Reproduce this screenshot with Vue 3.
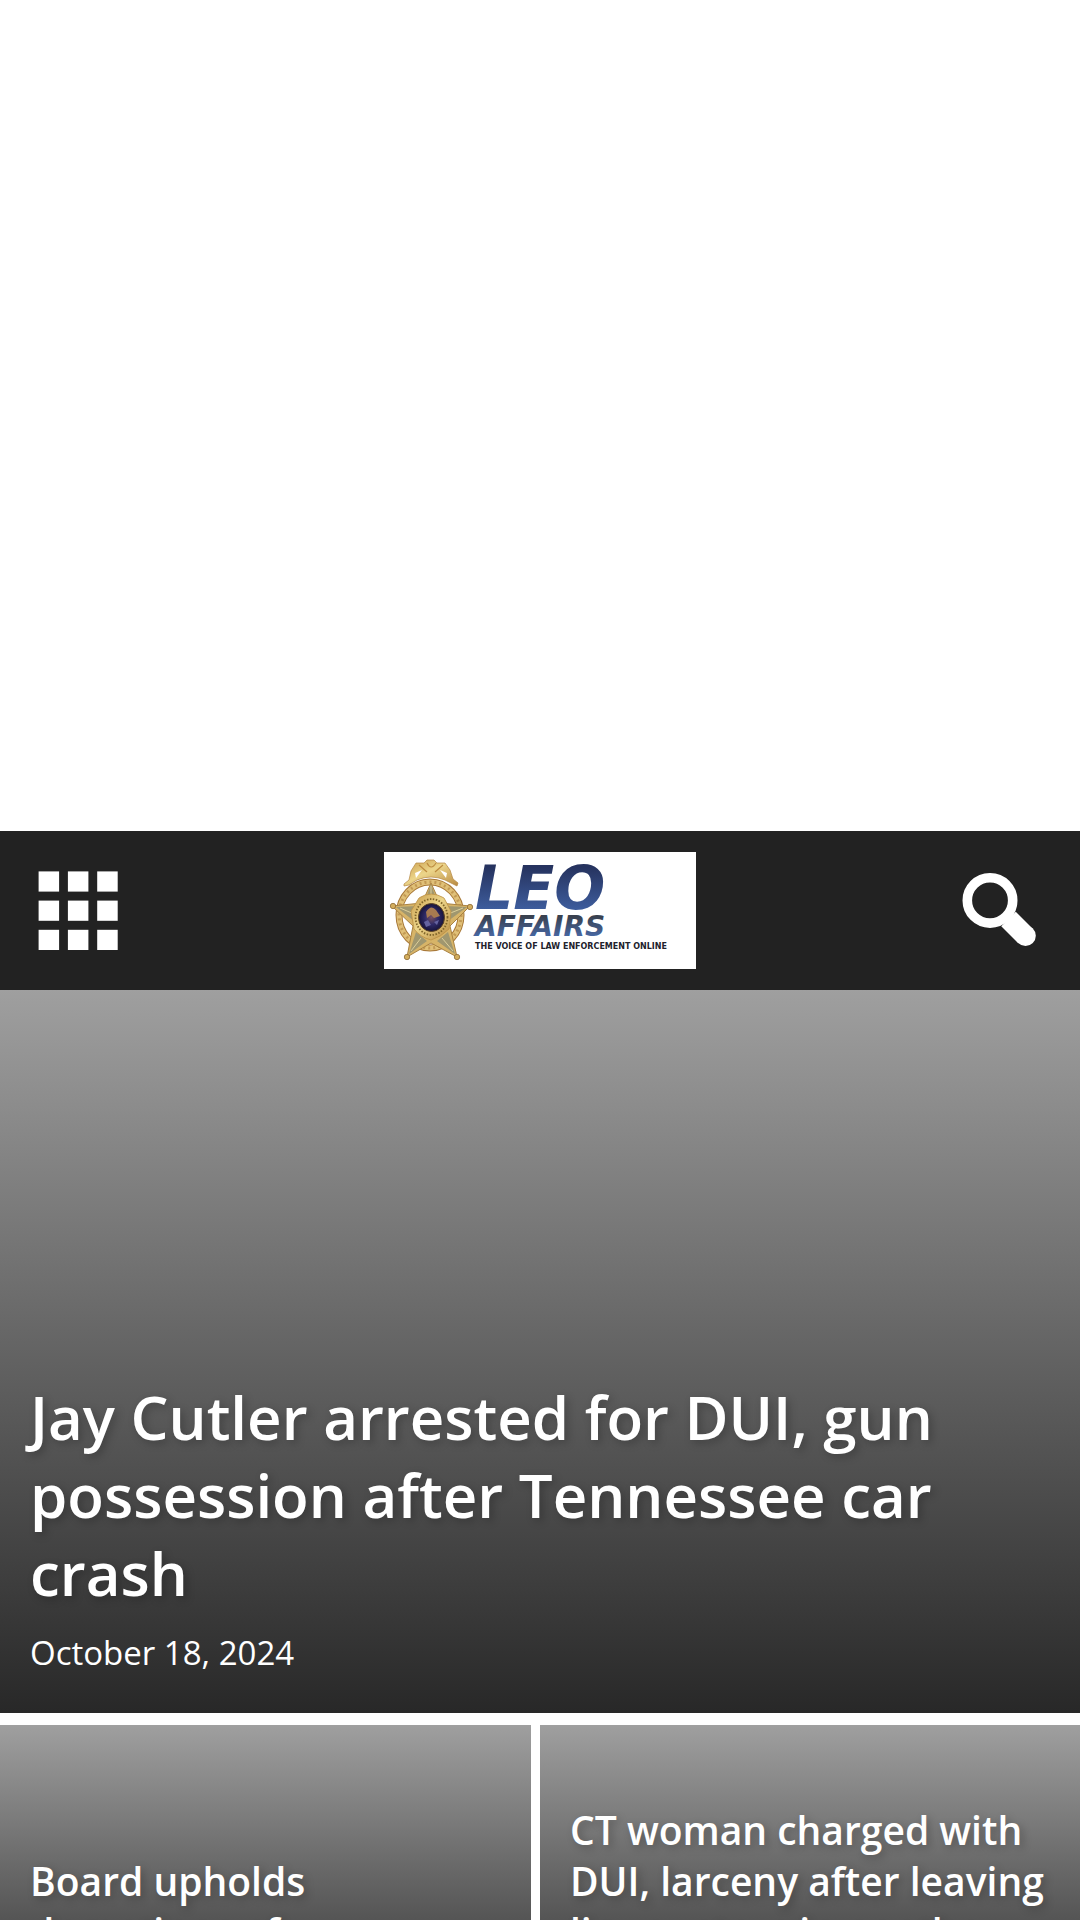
<template>
  <div class="page">
    <div class="ad-space"></div>

    <header class="site-header">
      <button class="icon-btn" type="button" aria-label="Menu">
        <svg class="icon" viewBox="0 0 80 79" fill="#fff">
          <template v-for="row in 3" :key="row">
            <rect
              v-for="col in 3"
              :key="col"
              :x="(col - 1) * 29.3 + 0.6"
              :y="(row - 1) * 29.2 + 0.4"
              width="20.5"
              height="20.2"
            />
          </template>
        </svg>
      </button>

      <a class="logo" href="#" aria-label="LEO Affairs">
        <svg class="logo-image" viewBox="0 0 312 117">
          <defs>
            <linearGradient id="blue" x1="0" y1="0" x2="0" y2="1">
              <stop offset="0.2" stop-color="#26335f" />
              <stop offset="0.8" stop-color="#3d5c9c" />
            </linearGradient>
            <linearGradient id="steel" x1="0" y1="0" x2="0" y2="1">
              <stop offset="0.2" stop-color="#39414f" />
              <stop offset="0.8" stop-color="#4767a3" />
            </linearGradient>
            <linearGradient id="gold" x1="0" y1="0" x2="1" y2="1">
              <stop offset="0" stop-color="#c79a48" />
              <stop offset="0.45" stop-color="#ecd58a" />
              <stop offset="1" stop-color="#b98a40" />
            </linearGradient>
            <radialGradient id="seal">
              <stop offset="0" stop-color="#775060" />
              <stop offset="0.5" stop-color="#302b68" />
              <stop offset="1" stop-color="#17133b" />
            </radialGradient>
          </defs>
          <rect width="312" height="117" fill="#fff" />

          <!-- badge -->
          <ellipse cx="46" cy="63" rx="31" ry="33" fill="none" stroke="#a87838" stroke-width="7" />
          <ellipse cx="46" cy="63" rx="31" ry="33" fill="none" stroke="#e0c078" stroke-width="5" />
          <ellipse cx="46" cy="63" rx="31" ry="33" fill="none" stroke="#c39a55" stroke-width="3" stroke-dasharray="2 3" />
          <path
            d="M20 32 L25 28 L27 19 L32 11 L40 11 L43 8 L50 8 L53 11 L61 11 L66 18 L69 27 L74 31 L73 34 L67 31 L61 28 Q47 22 33 28 L25 33 L20 34 Z"
            fill="url(#gold)"
            stroke="#b58743"
            stroke-width="0.7"
          />
          <path d="M31 21 L38 18 L32 26 Z M63 21 L56 18 L62 26 Z" fill="#fff" />
          <path d="M35 13 L43 20 M59 13 L51 20 M43 11 Q47 19 52 11" fill="none" stroke="#bd8b3f" stroke-width="1.2" />
          <path
            d="M47 31 L56 51 L86 54 L66 74 L73 105 L47 91 L23 105 L29 74 L8 54 L38 51 Z"
            fill="#d7b468"
            stroke="#a98242"
          />
          <path
            d="M47 32 L53 49 L41 49 Z M83 55 L61 54 L64 69 Z M12 55 L33 54 L30 69 Z M25 102 L32 80 L43 89 Z M71 102 L64 80 L53 89 Z"
            fill="#a0976f"
          />
          <path d="M47 34 V48 M79 56 L64 62 M16 56 L30 62 M27 99 L37 86 M69 99 L58 86" stroke="#ddd09b" stroke-width="1" />
          <g fill="#d3ad5d" stroke="#8d6a34" stroke-width="0.8">
            <circle cx="9" cy="54" r="2.7" />
            <circle cx="86" cy="55" r="2.7" />
            <circle cx="23" cy="105" r="2.7" />
            <circle cx="73" cy="105" r="2.7" />
          </g>
          <path
            d="M35 46 Q47 38 60 46 L67 59 Q66 70 65 77 Q57 85 47 88 Q36 85 30 77 L27 59 Z"
            fill="url(#gold)"
            stroke="#bd9144"
            stroke-width="0.8"
          />
          <ellipse cx="47.5" cy="65" rx="16" ry="18" fill="none" stroke="#806529" stroke-width="1.8" stroke-dasharray="1.5 1.5" />
          <ellipse cx="47.5" cy="65.5" rx="13" ry="14" fill="url(#seal)" stroke="#5b4221" />
          <path d="M42 60 Q47 52 52 58 L56 64 L50 66 L47 63 L43 66 Z" fill="#a77a50" />
          <path d="M40 70 L44 68 L47 73 L42 75 Z M50 70 L55 68 L53 73 Z" fill="#6563a0" />

          <text class="logo-leo" x="91" y="57" fill="url(#blue)">LEO</text>
          <text class="logo-affairs" x="91" y="84" fill="url(#steel)">AFFAIRS</text>
          <text class="logo-tagline" x="91" y="97">THE VOICE OF LAW ENFORCEMENT ONLINE</text>
        </svg>
      </a>

      <button class="icon-btn" type="button" aria-label="Search">
        <svg class="icon" viewBox="0 0 80 79" fill="none" stroke="#fff">
          <circle cx="28" cy="29.4" r="22.7" stroke-width="9.6" />
          <path d="M46.5 48 L63.5 65" stroke-width="20.5" />
          <circle cx="63.5" cy="64.8" r="10.3" fill="#fff" stroke="none" />
        </svg>
      </button>
    </header>

    <main class="news-grid">
      <article class="card card-large">
        <h3 class="card-title"><a href="#">{{ featured.title }}</a></h3>
        <time class="card-date" datetime="2024-10-18">{{ featured.date }}</time>
      </article>

      <div class="card-row">
        <article v-for="story in stories" :key="story" class="card card-small">
          <h3 class="card-title"><a href="#">{{ story }}</a></h3>
        </article>
      </div>
    </main>
  </div>
</template>

<script setup>
const featured = {
  title: 'Jay Cutler arrested for DUI, gun possession after Tennessee car crash',
  date: 'October 18, 2024'
};

const stories = [
  'Board upholds demotions of Massachusetts cops',
  'CT woman charged with DUI, larceny after leaving liquor store in another person’s car'
];
</script>

<style>
body {
  margin: 0;
  background: #fff;
}
</style>

<style scoped>
.page {
  height: 100vh;
  overflow: hidden;
  font-family: 'Open Sans', 'Noto Sans', sans-serif;
}

.ad-space {
  height: 831px;
}

.site-header {
  display: flex;
  justify-content: space-between;
  align-items: center;
  height: 159px;
  padding: 0 38px;
  background: #222;
}

.icon-btn {
  padding: 0;
  border: none;
  background: none;
  cursor: pointer;
}

.icon {
  display: block;
  width: 80px;
  height: 79px;
}

.logo-image {
  display: block;
  width: 312px;
  height: 117px;
}

.logo-leo,
.logo-affairs,
.logo-tagline {
  font-family: 'DejaVu Sans', sans-serif;
  font-weight: bold;
}

.logo-leo {
  font-size: 60px;
  font-style: italic;
}

.logo-affairs {
  font-size: 28px;
  font-style: italic;
}

.logo-tagline {
  font-size: 8px;
  fill: #22222c;
}

.card {
  display: flex;
  flex-direction: column;
  justify-content: flex-end;
  box-sizing: border-box;
  background: linear-gradient(to bottom, #9f9f9f, #282828);
  color: #fff;
}

.card-large {
  min-height: 723px;
  padding: 0 30px 38px;
}

.card-row {
  display: grid;
  grid-template-columns: 531fr 540fr;
  gap: 9px;
  margin-top: 12px;
}

.card-small {
  min-height: 312px;
  padding: 0 30px 29px;
}

.card-title {
  margin: 0;
  font-size: 39px;
  font-weight: 600;
  line-height: 51px;
  text-shadow: 3px 3px 9px rgba(0, 0, 0, 0.25);
}

.card-large .card-title {
  margin-bottom: 18px;
  font-size: 60px;
  line-height: 78px;
}

.card-title a {
  color: inherit;
  text-decoration: none;
}

.card-date {
  font-size: 33px;
  line-height: 45px;
}
</style>
